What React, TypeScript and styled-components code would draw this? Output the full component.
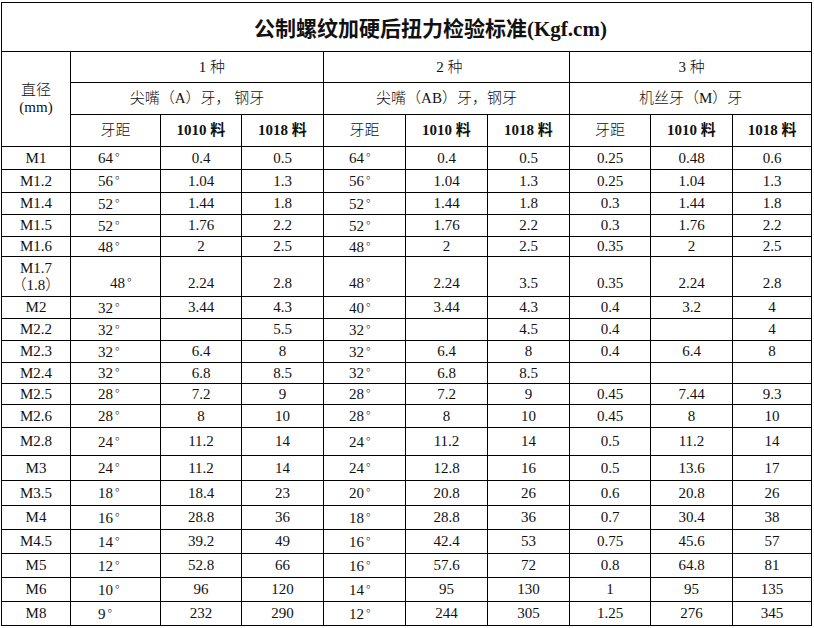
import React from "react";
import styled, { createGlobalStyle } from "styled-components";

const GlobalStyle = createGlobalStyle`
  html, body {
    margin: 0;
    padding: 0;
    background: #fff;
  }
  body {
    font-family: "Liberation Serif", "Noto Sans CJK SC", serif;
    color: #111;
  }
`;

const Page = styled.div`
  padding: 2px 0 0 1px;
`;

const Sheet = styled.table`
  border-collapse: collapse;
  table-layout: fixed;
  width: 810px;
  font-size: 15px;
`;

const Row = styled.tr<{ $h: number }>`
  height: ${(p) => p.$h}px;
`;

type CellProps = {
  $align?: "left" | "center";
  $pad?: number;
  $bold?: boolean;
  $valign?: "middle" | "bottom";
  $padBottom?: number;
};

const Cell = styled.td<CellProps>`
  border: 1px solid #000;
  padding: 0 0 ${(p) => p.$padBottom ?? 0}px ${(p) => p.$pad ?? 0}px;
  text-align: ${(p) => p.$align ?? "center"};
  vertical-align: ${(p) => p.$valign ?? "middle"};
  font-weight: ${(p) => (p.$bold ? 700 : 400)};
  line-height: 17px;
  white-space: nowrap;
  overflow: hidden;
`;

const TitleCell = styled.td`
  border: 1px solid #000;
  padding: 0 0 0 252px;
  text-align: left;
  vertical-align: middle;
  font-size: 21px;
  font-weight: 700;
  white-space: nowrap;
`;

const CjkText = styled.span`
  font-weight: 300;
`;

const Deg = styled.span`
  font-family: "Noto Sans CJK SC", sans-serif;
  font-weight: 300;
  font-size: 13px;
  margin-left: 2px;
`;

type Group = { name: string; shift: number; sub: string };

const groups: Group[] = [
  { name: "1 种", shift: 30, sub: "尖嘴（A）牙， 钢牙" },
  { name: "2 种", shift: 6, sub: "尖嘴（AB）牙，钢牙" },
  { name: "3 种", shift: 2, sub: "机丝牙（M）牙" },
];

const colWidths = [69, 90, 81, 82, 82, 82, 82, 81, 82, 79];

type DataRow = {
  dia: string;
  h: number;
  v: string[];
};

const rows: DataRow[] = [
  { dia: "M1", h: 23, v: ["64", "0.4", "0.5", "64", "0.4", "0.5", "0.25", "0.48", "0.6"] },
  { dia: "M1.2", h: 23, v: ["56", "1.04", "1.3", "56", "1.04", "1.3", "0.25", "1.04", "1.3"] },
  { dia: "M1.4", h: 22, v: ["52", "1.44", "1.8", "52", "1.44", "1.8", "0.3", "1.44", "1.8"] },
  { dia: "M1.5", h: 22, v: ["52", "1.76", "2.2", "52", "1.76", "2.2", "0.3", "1.76", "2.2"] },
  { dia: "M1.6", h: 20, v: ["48", "2", "2.5", "48", "2", "2.5", "0.35", "2", "2.5"] },
  { dia: "M1.7", h: 40, v: ["48", "2.24", "2.8", "48", "2.24", "3.5", "0.35", "2.24", "2.8"] },
  { dia: "M2", h: 22, v: ["32", "3.44", "4.3", "40", "3.44", "4.3", "0.4", "3.2", "4"] },
  { dia: "M2.2", h: 22, v: ["32", "", "5.5", "32", "", "4.5", "0.4", "", "4"] },
  { dia: "M2.3", h: 22, v: ["32", "6.4", "8", "32", "6.4", "8", "0.4", "6.4", "8"] },
  { dia: "M2.4", h: 21, v: ["32", "6.8", "8.5", "32", "6.8", "8.5", "", "", ""] },
  { dia: "M2.5", h: 21, v: ["28", "7.2", "9", "28", "7.2", "9", "0.45", "7.44", "9.3"] },
  { dia: "M2.6", h: 23, v: ["28", "8", "10", "28", "8", "10", "0.45", "8", "10"] },
  { dia: "M2.8", h: 28, v: ["24", "11.2", "14", "24", "11.2", "14", "0.5", "11.2", "14"] },
  { dia: "M3", h: 25, v: ["24", "11.2", "14", "24", "12.8", "16", "0.5", "13.6", "17"] },
  { dia: "M3.5", h: 25, v: ["18", "18.4", "23", "20", "20.8", "26", "0.6", "20.8", "26"] },
  { dia: "M4", h: 24, v: ["16", "28.8", "36", "18", "28.8", "36", "0.7", "30.4", "38"] },
  { dia: "M4.5", h: 24, v: ["14", "39.2", "49", "16", "42.4", "53", "0.75", "45.6", "57"] },
  { dia: "M5", h: 24, v: ["12", "52.8", "66", "16", "57.6", "72", "0.8", "64.8", "81"] },
  { dia: "M6", h: 24, v: ["10", "96", "120", "14", "95", "130", "1", "95", "135"] },
  { dia: "M8", h: 24, v: ["9", "232", "290", "12", "244", "305", "1.25", "276", "345"] },
];

// degree columns are left aligned, the rest centred
const degPad: Record<number, number> = { 0: 27, 3: 25 };

export default function App() {
  return (
    <>
      <GlobalStyle />
      <Page>
        <Sheet>
          <colgroup>
            {colWidths.map((w, i) => (
              <col key={i} style={{ width: w }} />
            ))}
          </colgroup>
          <tbody>
            <Row $h={49}>
              <TitleCell colSpan={10}>公制螺纹加硬后扭力检验标准(Kgf.cm)</TitleCell>
            </Row>
            <Row $h={31}>
              <Cell rowSpan={3}>
                <CjkText>直径</CjkText>
                <br />
                (mm)
              </Cell>
              {groups.map((g) => (
                <Cell key={g.name} colSpan={3} $pad={g.shift}>
                  <CjkText>{g.name}</CjkText>
                </Cell>
              ))}
            </Row>
            <Row $h={32}>
              {groups.map((g) => (
                <Cell key={g.sub} colSpan={3}>
                  <CjkText>{g.sub}</CjkText>
                </Cell>
              ))}
            </Row>
            <Row $h={32}>
              {groups.map((g) => (
                <React.Fragment key={g.name}>
                  <Cell>
                    <CjkText>牙距</CjkText>
                  </Cell>
                  <Cell $bold>1010 料</Cell>
                  <Cell $bold>1018 料</Cell>
                </React.Fragment>
              ))}
            </Row>
            {rows.map((r) => {
              const tall = r.h > 30;
              return (
                <Row key={r.dia} $h={r.h}>
                  <Cell>
                    {tall ? (
                      <>
                        {r.dia}
                        <br />
                        <CjkText>（1.8）</CjkText>
                      </>
                    ) : (
                      r.dia
                    )}
                  </Cell>
                  {r.v.map((val, i) => {
                    const isDeg = i in degPad;
                    return (
                      <Cell
                        key={i}
                        $align={isDeg ? "left" : "center"}
                        $pad={isDeg ? degPad[i] + (tall && i === 0 ? 12 : 0) : 0}
                        $valign={tall ? "bottom" : "middle"}
                        $padBottom={tall ? 4 : 0}
                      >
                        {val}
                        {isDeg && val !== "" && <Deg>°</Deg>}
                      </Cell>
                    );
                  })}
                </Row>
              );
            })}
          </tbody>
        </Sheet>
      </Page>
    </>
  );
}
